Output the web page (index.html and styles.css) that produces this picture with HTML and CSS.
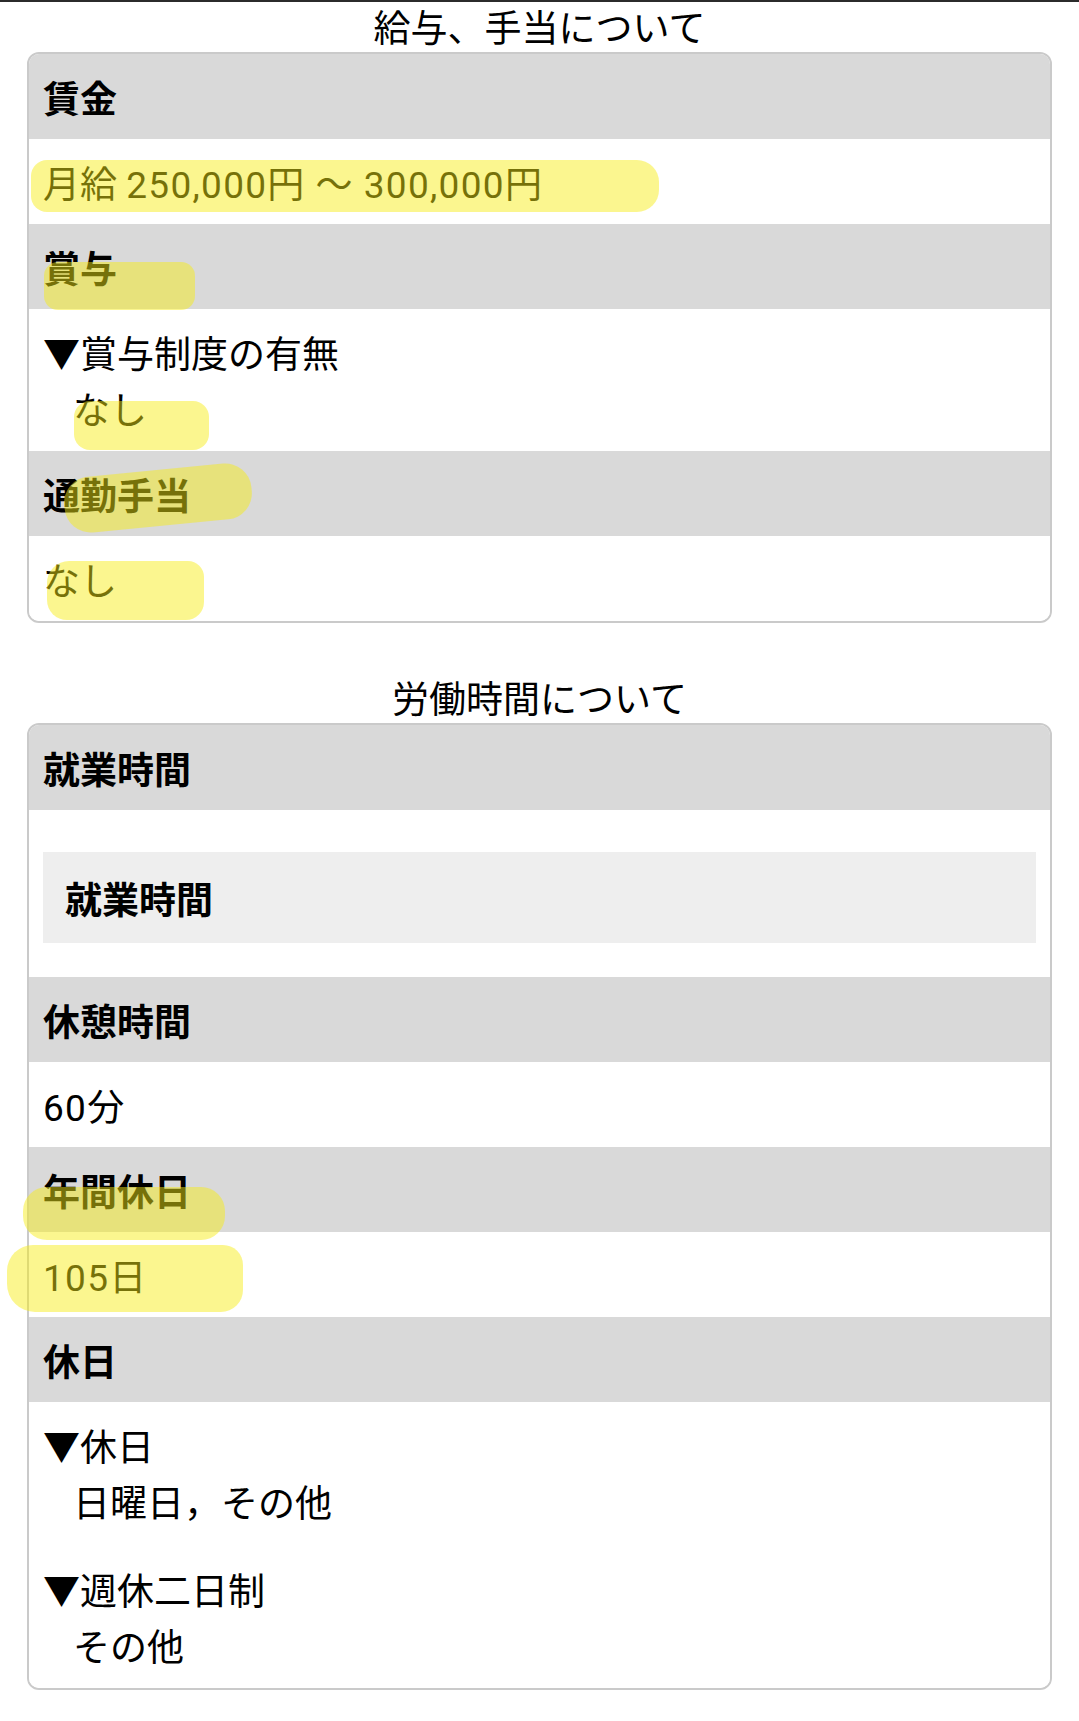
FILE: index.html
```html
<!DOCTYPE html>
<html lang="ja">
    <head>
        <meta charset="utf-8">
        <title>求人詳細</title>
        <link rel="stylesheet" href="styles.css">
    </head>
    <body>
        <div class="topline"></div>

        <section class="block">
            <h2 class="blockTitle">給与、手当について</h2>
            <div class="card">
                <div class="row head">賃金</div>
                <div class="row">月給 <span class="num">250,000</span>円 <span class="wave">～</span> <span class="num">300,000</span>円</div>
                <div class="row head">賞与</div>
                <div class="row note">
                    <p>▼賞与制度の有無</p>
                    <p class="indent">なし</p>
                </div>
                <div class="row head">通勤手当</div>
                <div class="row">なし</div>
            </div>
        </section>

        <section class="block second">
            <h2 class="blockTitle">労働時間について</h2>
            <div class="card">
                <div class="row head">就業時間</div>
                <div class="row boxed">
                    <div class="subBox">就業時間</div>
                </div>
                <div class="row head">休憩時間</div>
                <div class="row"><span class="num">60</span>分</div>
                <div class="row head">年間休日</div>
                <div class="row"><span class="num">105</span>日</div>
                <div class="row head">休日</div>
                <div class="row note">
                    <p>▼休日</p>
                    <p class="indent">日曜日，その他</p>
                    <p class="gap">▼週休二日制</p>
                    <p class="indent">その他</p>
                </div>
            </div>
        </section>

        <!-- marker strokes drawn over the screenshot -->
        <div class="mark mark1"></div>
        <div class="mark mark2"></div>
        <div class="mark mark3"></div>
        <div class="mark mark4"></div>
        <div class="mark mark5"></div>
        <div class="mark mark6"></div>
        <div class="mark mark7"></div>
    </body>
</html>
```

FILE: styles.css
```css
body {
    margin: 0;
    font-family: Roboto, "Noto Sans CJK JP", sans-serif;
    color: #000;
    background-color: #fff;
    position: relative;
}

.topline {
    height: 2px;
    background-color: #2b2b2b;
}

/* Section titles */
.blockTitle {
    margin: 0;
    height: 50px;
    line-height: 56px;
    font-size: 37px;
    font-weight: 400;
    text-align: center;
}

.second {
    margin-top: 50px;
}

/* Card with alternating rows */
.card {
    margin: 0 27px;
    border: 2px solid #cacaca;
    border-radius: 12px;
    overflow: hidden;
}

.row {
    padding: 19px 14px 11px;
    font-size: 37px;
    line-height: 55px;
    background-color: #fff;
}

.row.head {
    background-color: #d9d9d9;
    font-weight: 700;
}

.row.note {
    line-height: 56px;
}

.row p {
    margin: 0;
}

.row .indent {
    padding-left: 30px;
}

.row .gap {
    margin-top: 32px;
}

.num {
    letter-spacing: 1.3px;
}

.wave {
    margin: 0 2px;
}

.row.boxed {
    padding: 42px 14px 34px;
}

.subBox {
    background-color: #eeeeee;
    padding: 22px 22px 14px;
    font-weight: 700;
}

/* Highlighter strokes */
.mark {
    position: absolute;
    background-color: rgba(246, 236, 20, 0.48);
    border-radius: 20px;
    pointer-events: none;
}

.mark1 { left: 31px;  top: 160px;  width: 628px; height: 52px; border-radius: 16px 22px 22px 16px; }
.mark2 { left: 44px;  top: 262px;  width: 151px; height: 48px; border-radius: 14px; }
.mark3 { left: 74px;  top: 401px;  width: 135px; height: 49px; border-radius: 16px; }
.mark4 { left: 64px;  top: 470px;  width: 188px; height: 56px; border-radius: 26px; transform: rotate(-5.5deg); }
.mark5 { left: 47px;  top: 561px;  width: 157px; height: 59px; border-radius: 22px 16px 18px 20px; }
.mark6 { left: 23px;  top: 1187px; width: 202px; height: 53px; border-radius: 24px; }
.mark7 { left: 7px;   top: 1245px; width: 236px; height: 67px; border-radius: 26px 20px 22px 28px; }
```
